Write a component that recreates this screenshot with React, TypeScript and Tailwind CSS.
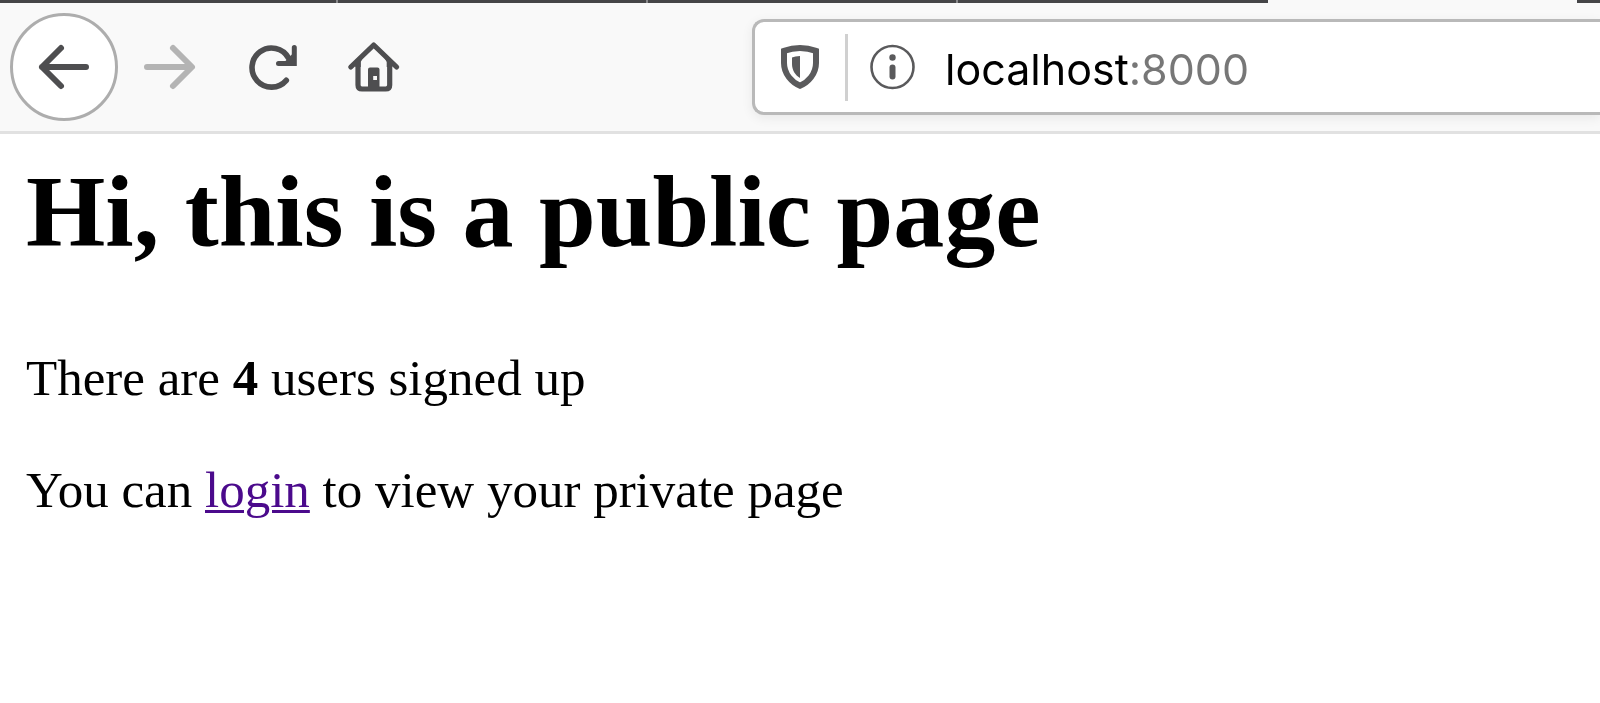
import { useState, type ReactNode } from "react";

function Icon({ children }: { children: ReactNode }) {
  return (
    <svg
      viewBox="0 0 60 60"
      className="size-[60px] shrink-0"
      fill="none"
      stroke="currentColor"
      strokeWidth="6"
      strokeLinecap="round"
      strokeLinejoin="round"
      aria-hidden="true"
    >
      {children}
    </svg>
  );
}

function NavButton({ label, disabled, children }: { label: string; disabled?: boolean; children: ReactNode }) {
  return (
    <button
      type="button"
      aria-label={label}
      disabled={disabled}
      className="flex h-[102px] w-[102px] shrink-0 items-center justify-center text-[#4e4e50] disabled:text-[#b4b4b4]"
    >
      <Icon>{children}</Icon>
    </button>
  );
}

function TabStrip() {
  return (
    <div className="flex h-[3px] bg-[#f9f9f9]">
      <div className="w-[338px] border-r-2 border-[#8a8a8c] bg-[#454547]" />
      <div className="w-[310px] border-r-2 border-[#8a8a8c] bg-[#454547]" />
      <div className="w-[310px] border-r-2 border-[#8a8a8c] bg-[#454547]" />
      <div className="w-[310px] bg-[#454547]" />
      <div className="w-[309px]" />
      <div className="flex-1 bg-[#454547]" />
    </div>
  );
}

function AddressBar() {
  const [url, setUrl] = useState("localhost:8000");
  return (
    <div className="ml-[328px] flex h-24 min-w-0 flex-1 items-center rounded-l-xl border-[3px] border-r-0 border-[#b9b9b9] bg-white pl-[15px] text-[#5a5a5c] shadow-[0_3px_12px_rgba(0,0,0,0.07)]">
      <button type="button" aria-label="Tracking protection" className="shrink-0">
        <Icon>
          <path strokeLinejoin="miter" d="M14 13.8Q22 11 30 11T46 13.8V26C46 37 38 45.500 30 48.800C22 45.500 14 37 14 26Z" />
          <path fill="currentColor" stroke="none" d="M22 20.500Q25 19.200 30 19V41C25 38 22 33 22 27Z" />
        </Icon>
      </button>
      <div className="ml-[15px] h-[67px] w-[3px] shrink-0 bg-[#d0d0d0]" />
      <button type="button" aria-label="Site information" className="ml-[15px] shrink-0">
        <Icon>
          <circle cx="29.500" cy="30" r="21" strokeWidth="2.600" />
          <circle cx="29.500" cy="20.500" r="3.200" fill="currentColor" stroke="none" />
          <path d="M29.500 30.500V39.500" />
        </Icon>
      </button>
      <input
        type="text"
        aria-label="Address"
        spellCheck={false}
        value={url}
        onChange={(e) => setUrl(e.target.value)}
        className="ml-[22px] h-16 min-w-0 flex-1 bg-[linear-gradient(to_right,#000_183px,#777_183px)] bg-clip-text pt-1 font-['Inter',sans-serif] text-[43px] leading-[60px] text-transparent outline-none"
      />
    </div>
  );
}

export default function App() {
  return (
    <div className="min-h-screen overflow-x-hidden bg-white">
      <TabStrip />
      <nav className="flex h-[131px] items-center border-b-[3px] border-[#e1e1e1] bg-[#f9f9f9] pl-[10px]">
        <button
          type="button"
          aria-label="Back"
          className="flex size-[108px] shrink-0 items-center justify-center rounded-full border-[3px] border-[#adadad] bg-white text-[#4e4e50]"
        >
          <Icon>
            <path d="M52 30H8M27 11L8 30L27 49" />
          </Icon>
        </button>
        <NavButton label="Forward" disabled>
          <path d="M8 30H52M34 11L53 30L34 49" />
        </NavButton>
        <NavButton label="Reload">
          <path strokeWidth="5.600" d="M45.300 43.300A19.500 19.500 0 1 1 47.500 21" />
          <path strokeWidth="5" strokeLinejoin="miter" d="M53.300 10.600V26.500H37.500" />
          <path fill="currentColor" stroke="none" d="M42 26.500L53.300 15V26.500Z" />
        </NavButton>
        <NavButton label="Home">
          <path strokeWidth="5.200" d="M7.800 30L30.700 8L53.600 30" />
          <path strokeWidth="5.200" d="M15 25V48Q15 52 19 52H42.700Q46.700 52 46.700 48V25" />
          <path
            fill="currentColor"
            fillRule="evenodd"
            stroke="none"
            d="M27 30.500H34.500Q36.500 30.500 36.500 32.500V52H25V32.500Q25 30.500 27 30.500ZM30.200 39V43H34V39Z"
          />
          <path fill="currentColor" stroke="none" d="M12.300 26L22 17L17.700 25V30H12.300ZM49.200 26L39.500 17L43.700 25V30H49.200Z" />
        </NavButton>
        <AddressBar />
      </nav>
      <main className="px-[26px] pt-[19px] font-['Liberation_Serif',serif] text-[51px] leading-[60px] text-black">
        <h1 className="text-[102px] leading-[118px] font-bold">Hi, this is a public page</h1>
        <p className="mt-[77px]">
          There are <b>4</b> users signed up
        </p>
        <p className="mt-[52px]">
          You can{" "}
          <a href="#login" className="text-[#4b0a8c] underline decoration-[3px] underline-offset-[3px]">
            login
          </a>{" "}
          to view your private page
        </p>
      </main>
    </div>
  );
}
